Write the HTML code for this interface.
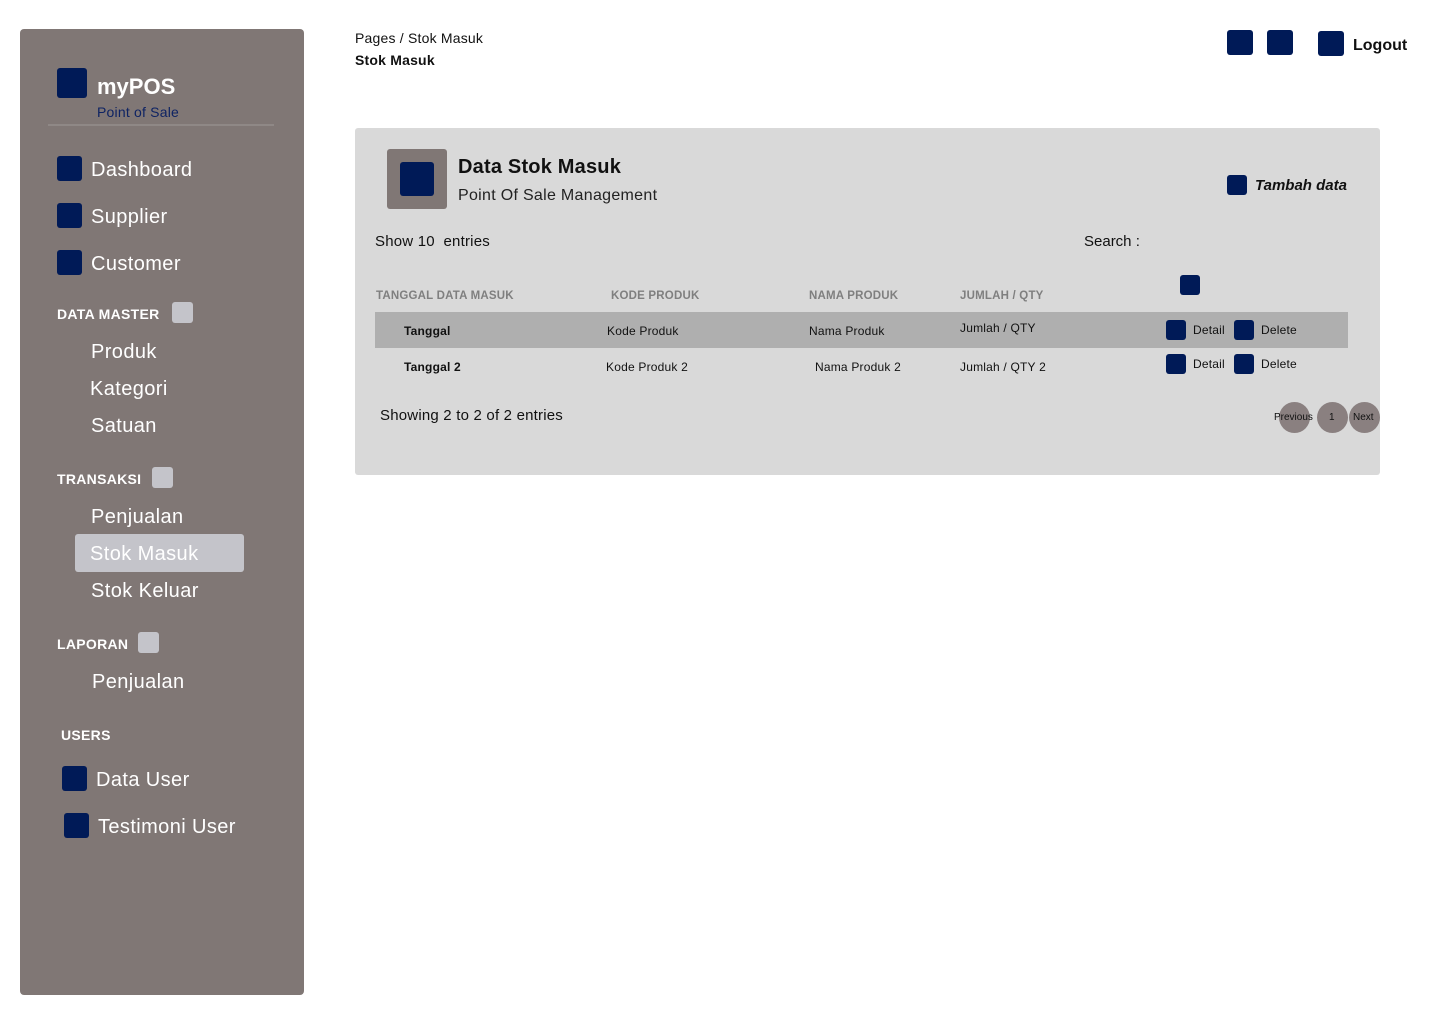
<!DOCTYPE html>
<html><head><meta charset="utf-8"><style>
*{margin:0;padding:0;box-sizing:border-box}
body{width:1440px;height:1024px;background:#fff;font-family:"Liberation Sans",Arial,sans-serif;position:relative;overflow:hidden;color:#111}
.a{position:absolute;white-space:nowrap}
.sq{position:absolute;background:#001A57;border-radius:3px}
.gq{position:absolute;background:#C4C4CA;border-radius:3px}
.sb{position:absolute;left:20px;top:29px;width:284px;height:966px;background:#807775;border-radius:4px}
.w{color:#fff}
.nav{font-size:20px;color:#fff;line-height:24px;letter-spacing:.4px;margin-top:1px}
.sec{font-size:14px;font-weight:bold;color:#fff;line-height:18px;letter-spacing:.3px}
.th{font-size:11.5px;font-weight:bold;color:#7f7f7f;line-height:14px;letter-spacing:.2px;margin-top:1px}
.td{font-size:12px;line-height:14px;letter-spacing:.2px}
.c{position:absolute;border-radius:50%;background:#8A8080;width:31px;height:31px}
</style></head><body>
<div class="sb"></div>
<div class="sq" style="left:57px;top:68px;width:30px;height:30px"></div>
<div class="a w" style="left:97px;top:74px;font-size:22px;font-weight:bold;line-height:26px">myPOS</div>
<div class="a" style="left:97px;top:104px;font-size:14px;color:#0E2363;line-height:16px;letter-spacing:.2px">Point of Sale</div>
<div class="a" style="left:48px;top:124px;width:226px;height:2px;background:#8f8886"></div>

<div class="sq" style="left:57px;top:156px;width:25px;height:25px"></div>
<div class="a nav" style="left:91px;top:157px">Dashboard</div>
<div class="sq" style="left:57px;top:203px;width:25px;height:25px"></div>
<div class="a nav" style="left:91px;top:204px">Supplier</div>
<div class="sq" style="left:57px;top:250px;width:25px;height:25px"></div>
<div class="a nav" style="left:91px;top:251px">Customer</div>

<div class="a sec" style="left:57px;top:305px">DATA MASTER</div>
<div class="gq" style="left:172px;top:302px;width:21px;height:21px"></div>
<div class="a nav" style="left:91px;top:339px">Produk</div>
<div class="a nav" style="left:90px;top:376px">Kategori</div>
<div class="a nav" style="left:91px;top:413px">Satuan</div>

<div class="a sec" style="left:57px;top:470px">TRANSAKSI</div>
<div class="gq" style="left:152px;top:467px;width:21px;height:21px"></div>
<div class="a nav" style="left:91px;top:504px">Penjualan</div>
<div class="a" style="left:75px;top:534px;width:169px;height:38px;background:#C4C4CA;border-radius:3px"></div>
<div class="a nav" style="left:90px;top:541px">Stok Masuk</div>
<div class="a nav" style="left:91px;top:578px">Stok Keluar</div>

<div class="a sec" style="left:57px;top:635px">LAPORAN</div>
<div class="gq" style="left:138px;top:632px;width:21px;height:21px"></div>
<div class="a nav" style="left:92px;top:669px">Penjualan</div>

<div class="a sec" style="left:61px;top:726px">USERS</div>
<div class="sq" style="left:62px;top:766px;width:25px;height:25px"></div>
<div class="a nav" style="left:96px;top:767px">Data User</div>
<div class="sq" style="left:64px;top:813px;width:25px;height:25px"></div>
<div class="a nav" style="left:98px;top:814px">Testimoni User</div>

<div class="a" style="left:355px;top:30px;font-size:14px;line-height:17px;letter-spacing:.2px">Pages / Stok Masuk</div>
<div class="a" style="left:355px;top:52px;font-size:14px;font-weight:bold;line-height:17px;letter-spacing:.2px">Stok Masuk</div>
<div class="sq" style="left:1227px;top:30px;width:26px;height:25px"></div>
<div class="sq" style="left:1267px;top:30px;width:26px;height:25px"></div>
<div class="sq" style="left:1318px;top:31px;width:26px;height:25px"></div>
<div class="a" style="left:1353px;top:36px;font-size:16px;font-weight:bold;line-height:19px">Logout</div>

<div class="a" style="left:355px;top:128px;width:1025px;height:347px;background:#D9D9D9;border-radius:3px"></div>
<div class="a" style="left:387px;top:149px;width:60px;height:60px;background:#807775;border-radius:3px"></div>
<div class="sq" style="left:400px;top:162px;width:34px;height:34px"></div>
<div class="a" style="left:458px;top:155px;font-size:20px;font-weight:bold;line-height:24px;letter-spacing:.2px">Data Stok Masuk</div>
<div class="a" style="left:458px;top:186px;font-size:16px;line-height:19px;color:#222;letter-spacing:.3px">Point Of Sale Management</div>
<div class="sq" style="left:1227px;top:175px;width:20px;height:20px"></div>
<div class="a" style="left:1255px;top:177px;font-size:15px;font-weight:bold;font-style:italic;line-height:18px">Tambah data</div>

<div class="a" style="left:375px;top:233px;font-size:15px;line-height:18px;letter-spacing:.2px">Show 10&nbsp; entries</div>
<div class="a" style="left:1084px;top:233px;font-size:15px;line-height:18px">Search :</div>

<div class="a th" style="left:376px;top:288px">TANGGAL DATA MASUK</div>
<div class="a th" style="left:611px;top:288px">KODE PRODUK</div>
<div class="a th" style="left:809px;top:288px">NAMA PRODUK</div>
<div class="a th" style="left:960px;top:288px">JUMLAH / QTY</div>
<div class="sq" style="left:1180px;top:275px;width:20px;height:20px"></div>

<div class="a" style="left:375px;top:312px;width:973px;height:36px;background:#AFAFAF"></div>
<div class="a td" style="left:404px;top:324px;font-weight:bold">Tanggal</div>
<div class="a td" style="left:607px;top:324px">Kode Produk</div>
<div class="a td" style="left:809px;top:324px">Nama Produk</div>
<div class="a td" style="left:960px;top:321px">Jumlah / QTY</div>
<div class="sq" style="left:1166px;top:320px;width:20px;height:20px"></div>
<div class="a td" style="left:1193px;top:323px">Detail</div>
<div class="sq" style="left:1234px;top:320px;width:20px;height:20px"></div>
<div class="a td" style="left:1261px;top:323px">Delete</div>

<div class="a td" style="left:404px;top:360px;font-weight:bold">Tanggal 2</div>
<div class="a td" style="left:606px;top:360px">Kode Produk 2</div>
<div class="a td" style="left:815px;top:360px">Nama Produk 2</div>
<div class="a td" style="left:960px;top:360px">Jumlah / QTY 2</div>
<div class="sq" style="left:1166px;top:354px;width:20px;height:20px"></div>
<div class="a td" style="left:1193px;top:357px">Detail</div>
<div class="sq" style="left:1234px;top:354px;width:20px;height:20px"></div>
<div class="a td" style="left:1261px;top:357px">Delete</div>

<div class="a" style="left:380px;top:407px;font-size:15px;line-height:18px;letter-spacing:.2px">Showing 2 to 2 of 2 entries</div>
<div class="c" style="left:1279px;top:402px"></div>
<div class="c" style="left:1317px;top:402px"></div>
<div class="c" style="left:1349px;top:402px"></div>
<div class="a" style="left:1274px;top:412px;font-size:10px;line-height:12px">Previous</div>
<div class="a" style="left:1329px;top:412px;font-size:10px;line-height:12px">1</div>
<div class="a" style="left:1353px;top:412px;font-size:10px;line-height:12px">Next</div>
</body></html>
